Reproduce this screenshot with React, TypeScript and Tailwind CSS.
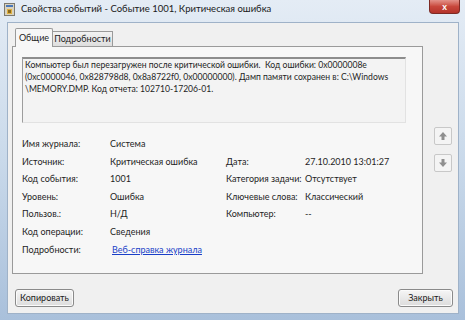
import React from 'react'

type Row = { label: string; value: string; label2?: string; value2?: string; link?: boolean }

const rows: Row[] = [
  { label: 'Имя журнала:', value: 'Система' },
  { label: 'Источник:', value: 'Критическая ошибка', label2: 'Дата:', value2: '27.10.2010 13:01:27' },
  { label: 'Код события:', value: '1001', label2: 'Категория задачи:', value2: 'Отсутствует' },
  { label: 'Уровень:', value: 'Ошибка', label2: 'Ключевые слова:', value2: 'Классический' },
  { label: 'Пользов.:', value: 'Н/Д', label2: 'Компьютер:', value2: '--' },
  { label: 'Код операции:', value: 'Сведения' },
  { label: 'Подробности:', value: 'Веб-справка журнала', link: true },
]

const TitleIcon = () => (
  <svg width="11" height="13" viewBox="0 0 11 13">
    <rect x="0.5" y="0.5" width="10" height="12" fill="#d9d3c0" stroke="#7d7a70" />
    <rect x="2" y="2" width="7" height="2" fill="#4a78b8" />
    <rect x="3" y="6" width="5" height="5" fill="#e0b040" />
    <rect x="4" y="7" width="3" height="3" fill="#8a6a20" />
  </svg>
)

const Arrow = ({ down }: { down?: boolean }) => (
  <div className="w-[18px] h-[18px] border border-[#c8c8c8] bg-[#f4f4f4] rounded-[2px] flex items-center justify-center">
    <svg width="10" height="10" viewBox="0 0 10 10" className={down ? 'rotate-180' : ''}>
      <path d="M5 1 L9 5.5 H6.5 V9 H3.5 V5.5 H1 Z" fill="#8f8f8f" />
    </svg>
  </div>
)

const Button = ({ children, w }: { children: React.ReactNode; w: string }) => (
  <div className={`${w} h-[18px] rounded-[3px] border border-[#8a8a8a] bg-gradient-to-b from-[#f6f6f6] to-[#dcdcdc] flex items-center justify-center text-[9px] text-[#1b1b1b] shadow-[inset_0_0_0_1px_#fbfbfb]`}>
    {children}
  </div>
)

export default function App() {
  return (
    <div
      className="w-[465px] h-[320px] overflow-hidden flex flex-col bg-gradient-to-b from-[#e4ecf5] via-[#c9d9ea] to-[#a9c0db] text-[#1e1e1e]"
      style={{ fontFamily: 'Lato, "Noto Sans", sans-serif' }}
    >
      {/* title bar */}
      <div className="h-[22px] flex items-start shrink-0">
        <div className="pl-[4px] pt-[3px]"><TitleIcon /></div>
        <div className="pl-[6px] pt-[3px] text-[9.5px] leading-[12px] text-[#1a1a1a] whitespace-nowrap">Свойства событий - Событие 1001, Критическая ошибка</div>
        <div className="ml-auto mr-[5px] w-[31px] h-[14px] rounded-b-[4px] bg-gradient-to-b from-[#e3928a] via-[#c8473c] to-[#b4332a] border border-[#7d2a24] border-t-0 flex items-center justify-center">
          <span className="text-white text-[9px] font-bold leading-none">x</span>
        </div>
      </div>

      {/* client */}
      <div className="ml-[7px] mr-[6px] mb-[6px] flex-1 bg-[#f0f0f0] border border-[#9fb2c8] flex flex-col">
        <div className="flex">
          <div className="ml-[4px] mt-[4px] w-[411px] flex flex-col">
            {/* tabs */}
            <div className="flex items-end h-[19px] pl-[3px] text-[9px]">
              <div className="h-[19px] w-[38px] border border-b-0 border-[#9a9a9a] bg-[#f7f7f7] flex items-center justify-center relative top-[1px] z-10 rounded-t-[2px]">Общие</div>
              <div className="h-[15px] w-[60px] border border-b-0 border-l-0 border-[#9a9a9a] bg-gradient-to-b from-[#f2f2f2] to-[#dedede] flex items-center justify-center">Подробности</div>
            </div>
            {/* panel */}
            <div className="h-[228px] border border-[#9a9a9a] bg-[#f7f7f7] pt-[10px] pl-[9px] pr-[16px]">
              <div className="h-[66px] border-t-[2px] border-t-[#8d8d8d] border-l border-l-[#9d9d9d] border-b border-b-[#e2e2e2] border-r border-r-[#e2e2e2] bg-[#f3f3f3] pl-[2px] text-[8.6px] leading-[12px] text-[#1e1e1e] whitespace-nowrap">
                <div>Компьютер был перезагружен после критической ошибки.&nbsp; Код ошибки: 0x0000008e</div>
                <div>(0xc0000046, 0x828798d8, 0x8a8722f0, 0x00000000). Дамп памяти сохранен в: C:\Windows</div>
                <div>\MEMORY.DMP. Код отчета: 102710-17206-01.</div>
              </div>
              <div className="mt-[12px] grid grid-cols-[88px_116px_79px_1fr] auto-rows-[17.6px] text-[9px] items-center whitespace-nowrap">
                {rows.map((r, i) => (
                  <React.Fragment key={i}>
                    <div>{r.label}</div>
                    <div className={r.link ? 'text-[#1a3fc8] underline pl-[2px]' : ''}>{r.value}</div>
                    <div>{r.label2 ?? ''}</div>
                    <div>{r.value2 ?? ''}</div>
                  </React.Fragment>
                ))}
              </div>
            </div>
          </div>
          {/* arrows */}
          <div className="ml-[11px] mt-[104px] flex flex-col gap-[9px]">
            <Arrow />
            <Arrow down />
          </div>
        </div>

        {/* buttons */}
        <div className="mt-[15px] flex justify-between pl-[7px] pr-[5px]">
          <Button w="w-[59px]">Копировать</Button>
          <Button w="w-[55px]">Закрыть</Button>
        </div>
      </div>
    </div>
  )
}
